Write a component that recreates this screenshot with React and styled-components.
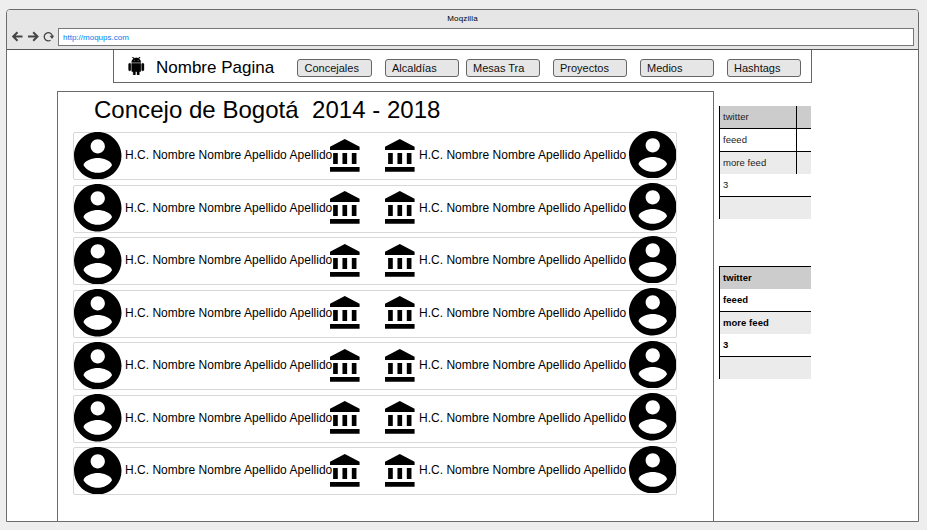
import React from "react";
import styled, { createGlobalStyle } from "styled-components";

const Global = createGlobalStyle`
  * { box-sizing: border-box; }
  body { margin: 0; background: #eeeeee; overflow: hidden; }
`;

const Desktop = styled.div`
  width: 927px;
  height: 530px;
  padding: 9px 8px 7px 6px;
  background: #eeeeee;
  color: #000;
  font-family: "Liberation Sans", Arial, sans-serif;
  white-space: pre;
`;

const Window = styled.div`
  display: flex;
  flex-direction: column;
  height: 513px;
  border: 1px solid #6c6c6c;
  border-radius: 4px 4px 0 0;
  background: #fff;
`;

const TitleBar = styled.header`
  flex: none;
  height: 40px;
  border-bottom: 1px solid #555;
  border-radius: 3px 3px 0 0;
  background: #e6e6e6;
`;

const WindowTitle = styled.div`
  height: 18px;
  padding-top: 4px;
  font-size: 8px;
  line-height: 10px;
  letter-spacing: 0.15px;
  text-align: center;
`;

const AddressRow = styled.div`
  display: flex;
  align-items: center;
  height: 18px;
  padding: 0 4px 0 5px;
`;

const BrowserIcons = styled.svg`
  flex: none;
  width: 46px;
  height: 18px;
  fill: none;
  stroke: #444;
  stroke-width: 2;
`;

const Address = styled.div`
  flex: 1;
  height: 18px;
  padding-left: 4px;
  border: 1px solid #777;
  background: #fff;
  color: #007df0;
  font-size: 8px;
  line-height: 17px;
`;

const NavBar = styled.nav`
  flex: none;
  display: flex;
  align-items: center;
  width: 699px;
  height: 33px;
  margin-left: 106px;
  padding: 0 9px 0 13px;
  border: 1px solid #666;
  border-top: 0;
`;

const Logo = styled.svg`
  flex: none;
  width: 18.5px;
  height: 18.5px;
  margin: 0 1px 0 0;
`;

const Brand = styled.h1`
  flex: none;
  width: 141px;
  margin: 3px 0 0 9.5px;
  font-size: 17px;
  font-weight: 400;
  line-height: 20px;
`;

const NavButton = styled.button`
  flex: none;
  width: 74.5px;
  height: 18px;
  margin: 3px ${(p) => p.$gap}px 0 0;
  padding: 0 0 0 6.5px;
  border: 1px solid #666;
  border-radius: 3px;
  background: #e6e6e6;
  color: #111;
  font: 11px/16px "Liberation Sans", Arial, sans-serif;
  text-align: left;
`;

const Body = styled.div`
  flex: 1;
  display: flex;
  align-items: flex-start;
  gap: 5px;
  padding: 8px 0 0 50px;
`;

const Panel = styled.main`
  width: 657px;
  height: 431px;
  padding: 3px 0 0 15px;
  border: 1px solid #6c6c6c;
`;

const PanelTitle = styled.h2`
  height: 37px;
  margin: 0;
  padding-left: 21px;
  font-size: 24px;
  font-weight: 400;
  line-height: 30px;
  letter-spacing: 0.03px;
`;

const List = styled.div`
  display: grid;
  gap: 4.5px;
`;

const MemberRow = styled.div`
  display: grid;
  grid-template-columns: 51px 205px 55px 34px 209.7px 48px;
  grid-template-rows: 44.6px;
  align-items: center;
  width: 604px;
  height: 48px;
  border: 1px solid #d8d8d8;
  border-radius: 2px;
`;

const Avatar = styled.svg`
  width: 47.5px;
  height: 47.5px;
  margin-top: ${(p) => p.$lift}px;
`;

const Bank = styled.svg`
  width: 29.6px;
  height: 32.7px;
`;

const Name = styled.span`
  font-size: 12px;
  line-height: 14px;
  letter-spacing: 0.015px;
`;

const Sidebar = styled.aside`
  display: grid;
  gap: 47px;
  padding-top: 15px;
`;

const Table = styled.div`
  width: 92px;
  border-left: 1px solid #000;
  color: ${(p) => (p.$bold ? "#000" : "#222")};
  font-size: 9.5px;
  font-weight: ${(p) => (p.$bold ? 700 : 400)};
  letter-spacing: 0.05px;
`;

const Cells = styled.div`
  display: grid;
  grid-template-columns: ${(p) => (p.$split ? "77px 1fr" : "1fr")};
  height: ${(p) => p.$h}px;
  border-top: ${(p) => (p.$top ? "1px solid #000" : "0")};
  border-bottom: ${(p) => (p.$line ? "1px solid #000" : "0")};
  background: ${(p) => p.$bg};
  line-height: 22px;
`;

const Cell = styled.div`
  padding-left: 3px;
  border-right: ${(p) => (p.$rule ? "1px solid #000" : "0")};
`;

const AccountCircle = ({ lift }) => (
  <Avatar $lift={lift} viewBox="2 2 20 20">
    <path d="M12 2C6.48 2 2 6.48 2 12s4.48 10 10 10 10-4.48 10-10S17.52 2 12 2zm0 3c1.66 0 3 1.34 3 3s-1.34 3-3 3-3-1.34-3-3 1.34-3 3-3zm0 14.2c-2.5 0-4.71-1.28-6-3.22.03-1.99 4-3.08 6-3.08 1.99 0 5.97 1.09 6 3.08-1.29 1.94-3.5 3.22-6 3.22z" />
  </Avatar>
);

const BankIcon = () => (
  <Bank viewBox="2 1 19 21">
    <path d="M4 10v7h3v-7H4zm6 0v7h3v-7h-3zM2 22h19v-3H2v3zm14-12v7h3v-7h-3zm-4.5-9L2 6v2h19V6l-9.5-5z" />
  </Bank>
);

const NAV = [
  ["Concejales", 13],
  ["Alcaldías", 6.5],
  ["Mesas Tra", 12.5],
  ["Proyectos", 12.5],
  ["Medios", 12.5],
  ["Hashtags", 0],
];

const MEMBER = "H.C. Nombre Nombre Apellido Apellido";
const MEMBERS = Array.from({ length: 7 }, () => [MEMBER, MEMBER]);

const FEED = [
  { text: "twitter", bg: "#cccccc", h: 23, line: true, split: true },
  { text: "feeed", bg: "#ffffff", h: 23, line: true, split: true },
  { text: "more feed", bg: "#ebebeb", h: 22, split: true },
  { text: "3", bg: "#ffffff", h: 23, line: true },
  { text: "", bg: "#ebebeb", h: 22 },
];

const FEED_BOLD = [
  { text: "twitter", bg: "#cccccc", h: 23, top: true },
  { text: "feeed", bg: "#ffffff", h: 23, line: true },
  { text: "more feed", bg: "#ebebeb", h: 22 },
  { text: "3", bg: "#ffffff", h: 23, line: true },
  { text: "", bg: "#ebebeb", h: 22 },
];

const FeedTable = ({ rows, bold }) => (
  <Table $bold={bold}>
    {rows.map((r, i) => (
      <Cells key={i} $split={r.split} $h={r.h} $top={r.top} $line={r.line} $bg={r.bg}>
        <Cell $rule={r.split}>{r.text}</Cell>
      </Cells>
    ))}
  </Table>
);

export default function App() {
  return (
    <Desktop>
      <Global />
      <Window>
        <TitleBar>
          <WindowTitle>Moqzilla</WindowTitle>
          <AddressRow>
            <BrowserIcons viewBox="0 0 46 18">
              <path d="M10.5 8.5H1.5M5.5 4.2 1.2 8.5l4.3 4.3M16 8.5h9M21.2 4.2l4.3 4.3-4.3 4.3" />
              <path d="M38.6 12.2A4.1 4.1 0 1 1 40.4 8.2" strokeWidth="1.3" />
              <path d="M37.6 7.8h4.6l-2.2 3.1z" fill="#444" stroke="none" />
            </BrowserIcons>
            <Address>http://moqups.com</Address>
          </AddressRow>
        </TitleBar>
        <NavBar>
          <Logo viewBox="0 0 24 24">
            <path stroke="#000" strokeWidth="0.4" d="M6 18c0 .55.45 1 1 1h1v3.5c0 .83.67 1.5 1.5 1.5s1.5-.67 1.5-1.5V19h2v3.5c0 .83.67 1.5 1.5 1.5s1.5-.67 1.5-1.5V19h1c.55 0 1-.45 1-1V8H6v10zM3.5 8C2.67 8 2 8.67 2 9.5v7c0 .83.67 1.5 1.5 1.5S5 17.33 5 16.5v-7C5 8.67 4.33 8 3.5 8zm17 0c-.83 0-1.5.67-1.5 1.5v7c0 .83.67 1.5 1.5 1.5s1.5-.67 1.5-1.5v-7c0-.83-.67-1.5-1.5-1.5zm-4.97-5.84l1.3-1.3c.2-.2.2-.51 0-.71-.2-.2-.51-.2-.71 0l-1.48 1.48C13.85 1.23 12.95 1 12 1c-.96 0-1.86.23-2.66.63L7.85.15c-.2-.2-.51-.2-.71 0-.2.2-.2.51 0 .71l1.31 1.31C6.97 3.26 6 5.01 6 7h12c0-1.99-.97-3.75-2.47-4.84zM10 5H9V4h1v1zm5 0h-1V4h1v1z" />
          </Logo>
          <Brand>Nombre Pagina</Brand>
          {NAV.map(([label, gap]) => (
            <NavButton key={label} $gap={gap}>
              {label}
            </NavButton>
          ))}
        </NavBar>
        <Body>
          <Panel>
            <PanelTitle>{"Concejo de Bogotá  2014 - 2018"}</PanelTitle>
            <List>
              {MEMBERS.map(([left, right], i) => (
                <MemberRow key={i}>
                  <AccountCircle lift={0} />
                  <Name>{left}</Name>
                  <BankIcon />
                  <BankIcon />
                  <Name>{right}</Name>
                  <AccountCircle lift={-1.4} />
                </MemberRow>
              ))}
            </List>
          </Panel>
          <Sidebar>
            <FeedTable rows={FEED} />
            <FeedTable rows={FEED_BOLD} bold />
          </Sidebar>
        </Body>
      </Window>
    </Desktop>
  );
}
